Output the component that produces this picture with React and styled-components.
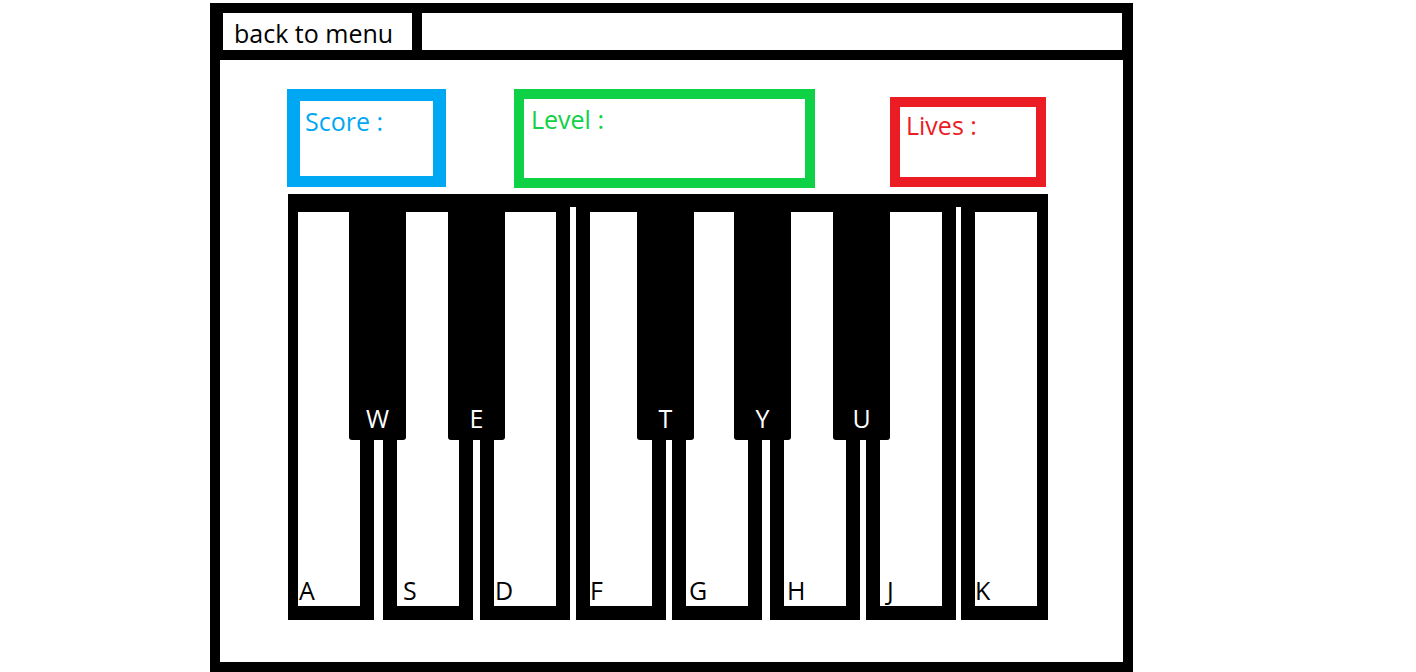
import React from "react";
import styled, { createGlobalStyle } from "styled-components";

const GlobalStyle = createGlobalStyle`
  html,
  body {
    margin: 0;
    background: #fff;
  }

  body {
    font-family: "Open Sans", "Noto Sans", sans-serif;
    font-size: 25px;
    line-height: 1;
  }
`;

const Page = styled.div`
  height: 672px;
  padding: 3px 0 0 210px;
  box-sizing: border-box;
  overflow: hidden;
`;

const Frame = styled.div`
  display: flex;
  flex-direction: column;
  width: 923px;
  height: 669px;
  box-sizing: border-box;
  border: 10px solid #000;
`;

const TopBar = styled.div`
  display: flex;
  gap: 10px;
  height: 47px;
  padding: 0 1px 10px 3px;
  box-sizing: border-box;
  background: #000;
`;

const MenuButton = styled.button`
  display: flex;
  align-items: flex-start;
  align-self: stretch;
  width: 189px;
  padding: 8px 0 0 11px;
  border: 0;
  border-radius: 0;
  background: #fff;
  color: #000;
  font: inherit;
  line-height: 1;
  text-align: left;
  cursor: pointer;
`;

const AddressField = styled.div`
  flex: 1;
  background: #fff;
`;

const Main = styled.main`
  flex: 1;
  padding: 29px 0 0 67px;
  background: #fff;
`;

const StatsRow = styled.div`
  display: flex;
  align-items: flex-start;
`;

const StatBox = styled.div`
  width: ${(p) => p.$w}px;
  height: ${(p) => p.$h}px;
  margin: ${(p) => p.$mt || 0}px 0 0 ${(p) => p.$ml || 0}px;
  padding: ${(p) => p.$pt}px 0 0 ${(p) => p.$pl}px;
  box-sizing: border-box;
  border: solid ${(p) => p.$color};
  border-width: ${(p) => p.$bw};
  color: ${(p) => p.$color};
`;

const Piano = styled.div`
  display: flex;
  width: 760px;
  margin: 6px 0 0 1px;
  border-top: 13px solid #000;
`;

const WhiteKey = styled.div`
  position: relative;
  display: flex;
  align-items: flex-end;
  width: ${(p) => p.$w}px;
  height: 413px;
  margin-left: ${(p) => p.$ml}px;
  padding: 0 0 3px ${(p) => p.$lx}px;
  box-sizing: border-box;
  border: solid #000;
  border-width: 5px ${(p) => p.$br}px 14px ${(p) => p.$bl}px;
  background: #fff;
  color: #000;
`;

const BlackKey = styled.div`
  position: absolute;
  top: -5px;
  right: ${(p) => p.$right}px;
  z-index: 1;
  display: flex;
  align-items: flex-end;
  justify-content: center;
  width: 57px;
  height: 233px;
  padding-bottom: 9px;
  box-sizing: border-box;
  border-radius: 0 0 3px 3px;
  background: #000;
  color: #fff;
`;

const keys = [
  { note: "A", w: 86, ml: 0, lx: 1, bl: 10, br: 14, sharp: "W", right: -46 },
  { note: "S", w: 90, ml: 9, lx: 6, bl: 14, br: 14, sharp: "E", right: -46 },
  { note: "D", w: 90, ml: 7, lx: 1, bl: 14, br: 14 },
  { note: "F", w: 90, ml: 6, lx: 0, bl: 14, br: 14, sharp: "T", right: -42 },
  { note: "G", w: 90, ml: 6, lx: 3, bl: 14, br: 14, sharp: "Y", right: -43 },
  { note: "H", w: 90, ml: 8, lx: 3, bl: 14, br: 14, sharp: "U", right: -44 },
  { note: "J", w: 90, ml: 6, lx: 7, bl: 14, br: 14 },
  { note: "K", w: 87, ml: 5, lx: 0, bl: 14, br: 11 },
];

const App = () => (
  <Page>
    <GlobalStyle />
    <Frame>
      <TopBar>
        <MenuButton type="button">back to menu</MenuButton>
        <AddressField />
      </TopBar>
      <Main>
        <StatsRow>
          <StatBox $w={159} $h={98} $bw="12px 13px 11px" $pt={8} $pl={5} $color="#00a8f3">
            Score :
          </StatBox>
          <StatBox $w={301} $h={99} $ml={68} $bw="10px" $pt={8} $pl={7} $color="#0ed145">
            Level :
          </StatBox>
          <StatBox $w={156} $h={90} $ml={75} $mt={8} $bw="10px" $pt={6} $pl={6} $color="#ec1c24">
            Lives :
          </StatBox>
        </StatsRow>
        <Piano>
          {keys.map((k) => (
            <WhiteKey key={k.note} $w={k.w} $ml={k.ml} $lx={k.lx} $bl={k.bl} $br={k.br}>
              {k.note}
              {k.sharp && <BlackKey $right={k.right}>{k.sharp}</BlackKey>}
            </WhiteKey>
          ))}
        </Piano>
      </Main>
    </Frame>
  </Page>
);

export default App;
